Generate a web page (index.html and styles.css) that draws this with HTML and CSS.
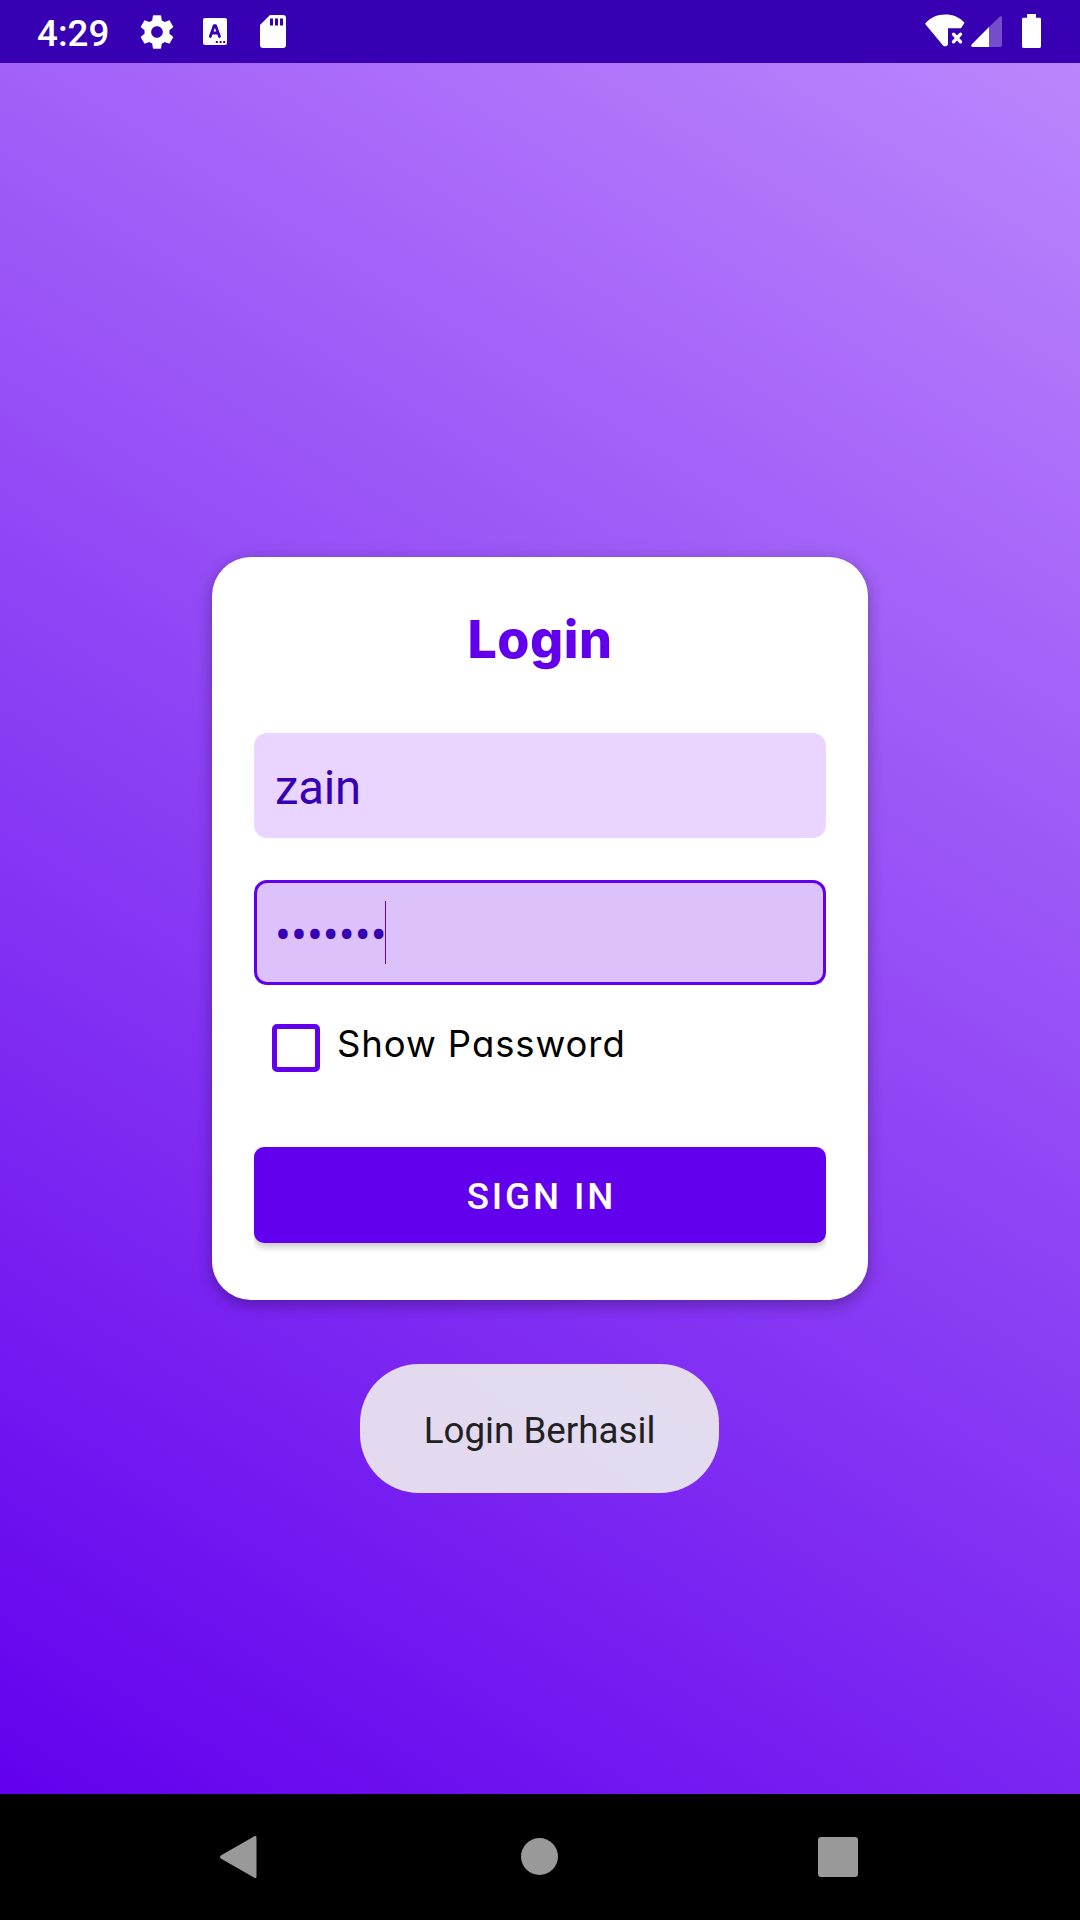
FILE: index.html
```html
<!DOCTYPE html>
<html lang="id">
<head>
<meta charset="utf-8">
<title>Login</title>
<link rel="stylesheet" href="styles.css">
</head>
<body>
<div class="screen">
  <header class="status">
    <span class="clock">4:29</span>
    <svg class="ic-gear" width="40" height="40" viewBox="0 0 24 24"><path d="M19.43 12.98c.04-.32.07-.64.07-.98s-.03-.66-.07-.98l2.11-1.65c.19-.15.24-.42.12-.64l-2-3.46c-.12-.22-.39-.3-.61-.22l-2.49 1c-.52-.4-1.08-.73-1.69-.98l-.38-2.65C14.46 2.18 14.25 2 14 2h-4c-.25 0-.46.18-.49.42l-.38 2.65c-.61.25-1.17.59-1.69.98l-2.49-1c-.23-.09-.49 0-.61.22l-2 3.46c-.13.22-.07.49.12.64l2.11 1.65c-.04.32-.07.65-.07.98s.03.66.07.98l-2.11 1.65c-.19.15-.24.42-.12.64l2 3.46c.12.22.39.3.61.22l2.49-1c.52.4 1.08.73 1.69.98l.38 2.65c.03.24.24.42.49.42h4c.25 0 .46-.18.49-.42l.38-2.65c.61-.25 1.17-.59 1.69-.98l2.49 1c.23.09.49 0 .61-.22l2-3.46c.12-.22.07-.49-.12-.64l-2.11-1.65zM12 15.5c-1.93 0-3.5-1.57-3.5-3.5s1.57-3.5 3.5-3.5 3.5 1.57 3.5 3.5-1.57 3.5-3.5 3.5z"/></svg>
    <svg class="ic-lang" width="24" height="27" viewBox="0 0 24 27"><rect width="24" height="27" rx="2"/><g class="cut-line"><path d="M7.3 18.5 11.2 7.6h1.4l3.9 10.900M8.6 15h6.6"/></g><path class="cut" d="M12.8 23h2v2h-2zM16.6 23h2v2h-2zM20.2 23h2v2h-2z"/></svg>
    <svg class="ic-sd" width="26" height="33" viewBox="0 0 26 33"><path d="M10 0h13a3 3 0 0 1 3 3v27a3 3 0 0 1-3 3H3a3 3 0 0 1-3-3V10z"/><path class="cut" d="M10 3.5h3v7h-3zM15 3.5h3v7h-3zM20 3.5h3v7h-3z"/></svg>
    <div class="system">
      <svg width="40" height="34" viewBox="0 0 40 34"><path d="M.4 9.200C5.500 3.200 12 .4 20 .4s14.500 2.600 19.500 8.300L36 14.200H23V30.500c-1.500 2.400-4 2.400-5.400.4L.6 10.500z"/><path class="cross" d="m28.500 20.200 7 7.600m0-7.600-7 7.600"/></svg>
      <svg class="ic-signal" width="31" height="31" viewBox="0 0 31 31"><path d="M18 11v20H1.500C0 31-.3 29.700.6 28.500z"/><path class="dim" d="M18 11 28.500.7C29.800-.4 31 .2 31 1.700V29a2 2 0 0 1-2 2H18z"/></svg>
      <svg class="ic-battery" width="19" height="34" viewBox="0 0 19 34"><path d="M5 0h9v3.800h3.500c1 0 1.500.6 1.500 1.500v27c0 1-.6 1.700-1.500 1.700h-16C.6 34 0 33.300 0 32.300v-27c0-.9.6-1.500 1.500-1.500H5z"/></svg>
    </div>
  </header>

  <main class="content">
    <section class="card">
      <h1 class="title">Login</h1>
      <div class="field">zain</div>
      <div class="field focused"><span class="dots">•••••••</span><span class="caret"></span></div>
      <div class="check"><span class="box"></span><span class="check-label">Show Password</span></div>
      <div class="button-clip"><button class="button">SIGN IN</button></div>
    </section>
    <div class="toast">Login Berhasil</div>
  </main>

  <nav class="nav">
    <svg width="44" height="44" viewBox="0 0 44 44"><path d="M4.200 20.200 37 1.400c1.600-.9 2.500-.2 2.500 1.200v38.800c0 1.400-.9 2.100-2.500 1.200L4.200 23.800c-1.600-1-1.600-2.600 0-3.600z"/></svg>
    <svg width="44" height="44" viewBox="0 0 44 44"><circle cx="22.500" cy="21.500" r="18.500"/></svg>
    <svg width="44" height="44" viewBox="0 0 44 44"><rect x="2" y="2" width="40" height="40" rx="3"/></svg>
  </nav>
</div>
</body>
</html>
```
FILE: styles.css
```css
* { box-sizing: border-box; }

body {
  margin: 0;
  font-family: Roboto, sans-serif;
}

.screen {
  width: 1080px;
  height: 1920px;
  display: flex;
  flex-direction: column;
  overflow: hidden;
}

svg { display: block; flex: none; }

/* Status bar */
.status {
  height: 63px;
  flex: none;
  display: flex;
  align-items: center;
  padding: 0 39px 0 37px;
  background: #3700b3;
  fill: #fff;
}
.clock {
  width: 100px;
  font-size: 36.75px;
  font-weight: 500;
  line-height: 43px;
  padding-top: 4px;
  color: #fff;
}
.ic-lang { margin: 0 33px 0 26px; }
.cut { fill: #3700b3; }
.cut-line path {
  fill: none;
  stroke: #3700b3;
  stroke-width: 2.8;
  stroke-linejoin: round;
  stroke-linecap: round;
}
.system {
  margin-left: auto;
  display: flex;
  align-items: center;
  padding-bottom: 1px;
}
.cross { stroke: #fff; stroke-width: 3.4; stroke-linecap: round; }
.dim { opacity: .3; }
.ic-signal { margin: 0 20px 0 6px; }

/* Login screen */
.content {
  height: 1731px;
  flex: none;
  display: flex;
  flex-direction: column;
  align-items: center;
  padding-top: 494px;
  background: linear-gradient(31.96deg, #6200ee, #bb86fc);
}
.card {
  width: 656px;
  height: 743px;
  padding: 42px;
  border-radius: 39px;
  background: #fff;
  box-shadow: 0 6px 14px rgba(0, 0, 0, .2), 0 2px 18px rgba(0, 0, 0, .12);
}
.title {
  margin: 0 0 54px;
  padding-top: 1px;
  height: 80px;
  font: 800 52px/79px Inter, sans-serif;
  letter-spacing: .5px;
  text-align: center;
  color: #6200ee;
}
.field {
  height: 105px;
  margin-bottom: 42px;
  padding: 5px 21px 0;
  display: flex;
  align-items: center;
  border-radius: 13px;
  background: #e9d5ff;
  color: #3700b3;
  font-size: 47.25px;
  letter-spacing: -.2px;
}
.focused {
  margin-bottom: 39px;
  padding: 0 18px;
  border: 3px solid #6200ee;
  background: #dcc1fb;
}
.dots {
  padding-top: 6px;
  letter-spacing: 0;
}
.caret {
  width: 1px;
  height: 63px;
  margin-left: -1.5px;
  background: #6200ee;
}
.check {
  height: 48px;
  margin-bottom: 75px;
  padding-left: 18px;
  display: flex;
}
.box {
  width: 48px;
  height: 48px;
  border: 5px solid #6200ee;
  border-radius: 5px;
}
.check-label {
  margin-left: 17px;
  font: 400 36.500px/40px Inter, sans-serif;
  font-feature-settings: "cv11";
  letter-spacing: .9px;
  color: #000;
}
.button-clip {
  height: 110px;
  overflow: hidden;
}
.button {
  display: block;
  width: 100%;
  height: 96px;
  padding: 2px 0 0 3px;
  border: 0;
  border-radius: 10px;
  background: #6200ee;
  box-shadow: 0 4px 7px rgba(0, 0, 0, .22);
  color: #fff;
  font: 500 36.75px/43px Roboto, sans-serif;
  letter-spacing: 2.9px;
}
.toast {
  width: 359px;
  height: 129px;
  margin: 64px 1px 0 0;
  border-radius: 59px;
  background: rgba(238, 238, 238, .9);
  color: #212121;
  font-size: 36.75px;
  line-height: 133px;
  text-align: center;
}

/* Navigation bar */
.nav {
  height: 126px;
  flex: none;
  display: flex;
  align-items: center;
  justify-content: space-between;
  padding: 0 220px 0 217px;
  background: #000;
  fill: #999;
}
```
